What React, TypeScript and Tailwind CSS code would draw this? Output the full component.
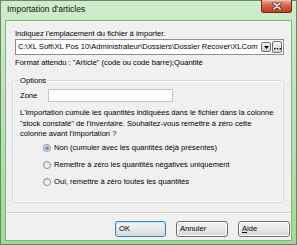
import React from "react";

function Radio({ checked, label }: { checked?: boolean; label: string }) {
  return (
    <div className="h-[17px] flex items-center pl-[30px]">
      <div className="w-[8px] h-[8px] rounded-full border border-[#8e8f8f] bg-gradient-to-br from-[#dcdcdc] to-[#ffffff] flex items-center justify-center shrink-0">
        {checked && (
          <div className="w-[4px] h-[4px] rounded-full bg-gradient-to-br from-[#9fd0f5] to-[#1f5fa8]" />
        )}
      </div>
      <span className="ml-[3px] whitespace-nowrap">{label}</span>
    </div>
  );
}

function Btn({
  w,
  children,
  def,
}: {
  w: string;
  children: React.ReactNode;
  def?: boolean;
}) {
  return (
    <div
      className={`${w} h-[16px] rounded-[3px] border ${
        def ? "border-[#3c7fb1] shadow-[inset_0_0_0_1px_#bfe6f8]" : "border-[#707070] shadow-[inset_0_0_0_1px_#fbfbfb]"
      } bg-gradient-to-b from-[#f4f4f4] via-[#e9e9e9] to-[#d6d6d6] flex items-center pl-[3px] leading-[14px] text-black`}
    >
      {children}
    </div>
  );
}

export default function App() {
  return (
    <div
      className="w-[297px] h-[245px] overflow-hidden text-[7.6px] text-black"
      style={{ fontFamily: '"Liberation Sans", Arial, sans-serif' }}
    >
      <div className="w-full h-full border border-[#6a8a67] bg-gradient-to-b from-[#cfeccb] via-[#b9e2b3] to-[#a3d69c] flex flex-col">
        {/* Title bar */}
        <div className="h-[19px] flex items-start shrink-0">
          <div className="pl-[6px] pt-[3px] text-[8.5px] leading-[10px] text-[#111]">
            Importation d'articles
          </div>
          <div className="ml-auto mr-[4px] -mt-px w-[31px] h-[13px] rounded-b-[3px] border border-t-0 border-[#6b2a1c] bg-gradient-to-b from-[#eaa993] via-[#d2603f] to-[#c3401d] shadow-[inset_0_1px_0_0_#f3c3b3] flex items-center justify-center">
            <svg width="10" height="8" viewBox="0 0 10 8">
              <path d="M2 1.2 L8 6.8 M8 1.2 L2 6.8" stroke="#4a1a10" strokeWidth="3.2" strokeLinecap="round" />
              <path d="M2 1.2 L8 6.8 M8 1.2 L2 6.8" stroke="#ffffff" strokeWidth="1.7" strokeLinecap="round" />
            </svg>
          </div>
        </div>

        {/* Client */}
        <div className="ml-[4px] mr-[4px] h-[221px] shrink-0 border border-[#7cb977] bg-[#f0f0f0] flex flex-col">
          <div className="pl-[9px] pt-[7px] h-[18px] leading-[11px] whitespace-nowrap">
            Indiquez l'emplacement du fichier à importer.
          </div>
          <div className="ml-[9px] w-[269px] h-[16px] border border-[#8d8d8d] bg-white flex items-center">
            <div className="flex-1 pl-[2px] leading-[14px] whitespace-nowrap overflow-hidden">
              C:\XL Soft\XL Pos 10\Administrateur\Dossiers\Dossier Recover\XLCom
            </div>
            <div className="w-[10px] h-[10px] rounded-[2px] border border-[#6f6f6f] bg-gradient-to-b from-[#f5f5f5] to-[#cfcfcf] flex items-center justify-center">
              <svg width="5" height="3" viewBox="0 0 5 3">
                <path d="M0 0 H5 L2.5 3 Z" fill="#000" />
              </svg>
            </div>
            <div className="ml-[1px] mr-[1px] w-[10px] h-[12px] rounded-[2px] border border-[#6f6f6f] bg-gradient-to-b from-[#f5f5f5] to-[#d3d3d3] flex items-end justify-center pb-[2px]">
              <svg width="7" height="2" viewBox="0 0 7 2">
                <rect x="0" y="0" width="1.4" height="1.4" fill="#000" />
                <rect x="2.8" y="0" width="1.4" height="1.4" fill="#000" />
                <rect x="5.6" y="0" width="1.4" height="1.4" fill="#000" />
              </svg>
            </div>
          </div>
          <div className="pl-[9px] mt-[2px] h-[11px] leading-[11px] whitespace-nowrap">
            Format attendu : "Article" (code ou code barre);Quantité
          </div>

          {/* Group box */}
          <div className="relative ml-[6px] mt-[12px] w-[272px] h-[123px] border border-[#d5d9dd] rounded-[3px] shadow-[inset_0_0_0_1px_#ffffff] flex flex-col">
            <div className="absolute -top-[6px] left-[6px] px-[1px] bg-[#f0f0f0] leading-[11px]">
              Options
            </div>
            <div className="mt-[8px] h-[13px] flex items-center pl-[7px]">
              <span className="w-[28px]">Zone</span>
              <div className="w-[125px] h-[13px] border border-[#c3c7cc] bg-white" />
            </div>
            <div className="pl-[7px] mt-[6px] leading-[10.5px] whitespace-nowrap">
              L'importation cumule les quantités indiquées dans le fichier dans la colonne
              <br />
              "stock constaté" de l'inventaire. Souhaitez-vous remettre à zéro cette
              <br />
              colonne avant l'importation ?
            </div>
            <Radio checked label="Non (cumuler avec les quantités déjà présentes)" />
            <Radio label="Remettre à zéro les quantités négatives uniquement" />
            <Radio label="Oui, remettre à zéro toutes les quantités" />
          </div>

          {/* Separator */}
          <div className="mt-[9px] h-px bg-[#d5d5d5]" />
          <div className="h-px bg-white" />

          {/* Buttons */}
          <div className="mt-[7px] flex pl-[109px]">
            <Btn w="w-[51px]" def>
              OK
            </Btn>
            <div className="ml-[10px]">
              <Btn w="w-[52px]">Annuler</Btn>
            </div>
            <div className="ml-[10px]">
              <Btn w="w-[52px]">
                <span>
                  <span className="underline">A</span>ide
                </span>
              </Btn>
            </div>
          </div>
        </div>
      </div>
    </div>
  );
}
